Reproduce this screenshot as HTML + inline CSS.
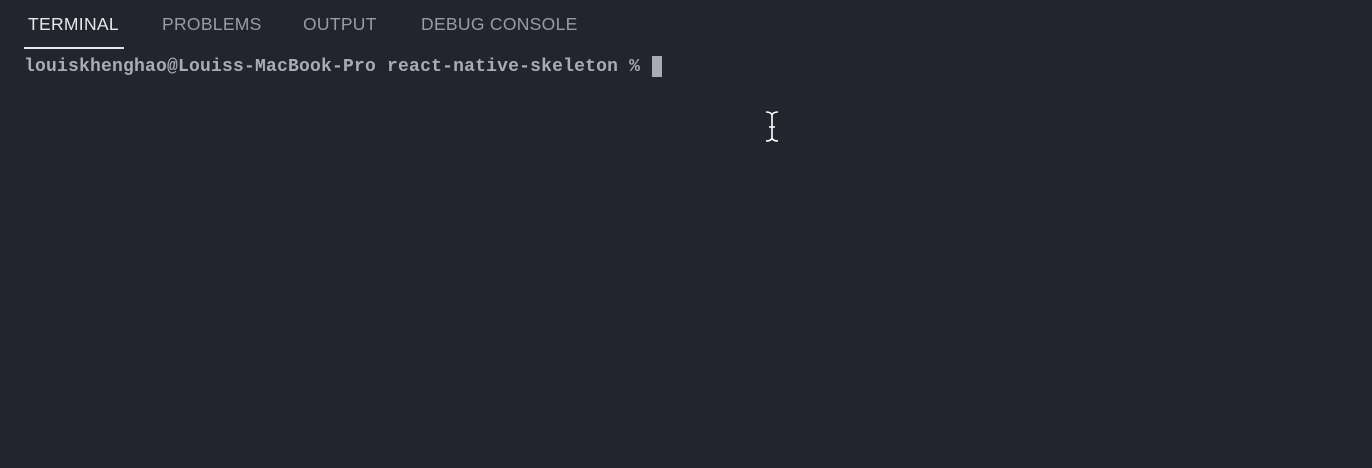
<!DOCTYPE html>
<html><head><style>
html,body{margin:0;padding:0;width:1372px;height:468px;background:#22252e;overflow:hidden}
.tab{position:absolute;top:14px;font-family:"Liberation Sans",sans-serif;font-size:17.5px;color:#9a9ca5;letter-spacing:0.3px}
.ul{position:absolute;left:24px;top:47px;width:100px;height:2px;background:#e6e6e6}
.term{position:absolute;left:24px;top:56px;font-family:"Liberation Mono",monospace;font-size:18px;font-weight:bold;color:#a9acb8;letter-spacing:0.2px;white-space:pre;line-height:22px}
.cur{position:absolute;left:652px;top:56px;width:10px;height:21px;background:#a9acb8}
</style></head><body>
<div class="tab" style="left:28px;color:#e8e8e8">TERMINAL</div>
<div class="tab" style="left:162px">PROBLEMS</div>
<div class="tab" style="left:303px">OUTPUT</div>
<div class="tab" style="left:421px">DEBUG CONSOLE</div>
<div class="ul"></div>
<div class="term">louiskhenghao@Louiss-MacBook-Pro react-native-skeleton %</div>
<div class="cur"></div>
<svg style="position:absolute;left:764px;top:110px" width="16" height="34" viewBox="0 0 16 34">
<path d="M2 2 Q7 2 8 5 Q9 2 14 2 M8 5 V29 M2 31 Q7 31 8 28 Q9 31 14 31 M5 17 H11" stroke="#fff" stroke-width="1.6" fill="none"/>
</svg>
</body></html>
